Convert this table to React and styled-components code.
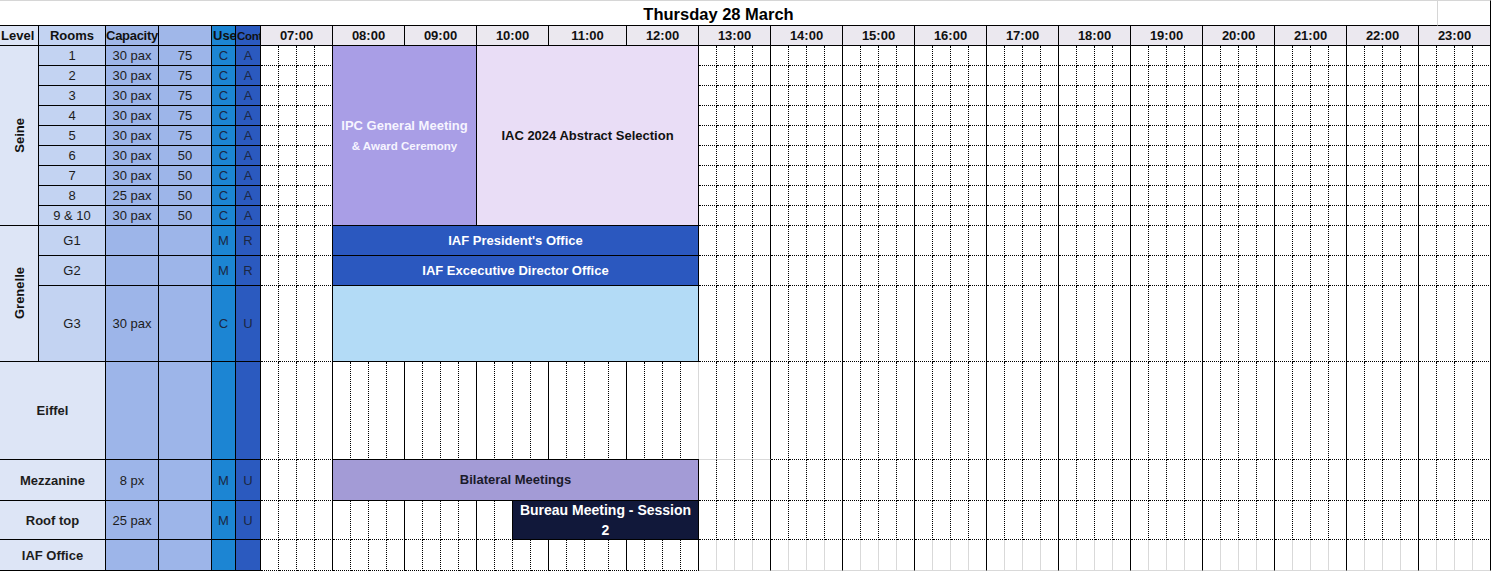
import styled, { createGlobalStyle } from "styled-components"

const HOURS = ["07:00", "08:00", "09:00", "10:00", "11:00", "12:00", "13:00", "14:00", "15:00",
  "16:00", "17:00", "18:00", "19:00", "20:00", "21:00", "22:00", "23:00"]

// every hour is cut in four quarters, 11:00 is a bit wider in the sheet
const SUBS = HOURS.flatMap(h => (h === "11:00" ? [18, 18, 24, 18] : [18, 18, 18, 18]))
const SUB_TRACKS = SUBS.map(w => w + "px").join(" ")

const rooms = [
  { room: "1", cap: "30 pax", size: "75", use: "C", cont: "A" },
  { room: "2", cap: "30 pax", size: "75", use: "C", cont: "A" },
  { room: "3", cap: "30 pax", size: "75", use: "C", cont: "A" },
  { room: "4", cap: "30 pax", size: "75", use: "C", cont: "A" },
  { room: "5", cap: "30 pax", size: "75", use: "C", cont: "A" },
  { room: "6", cap: "30 pax", size: "50", use: "C", cont: "A" },
  { room: "7", cap: "30 pax", size: "50", use: "C", cont: "A" },
  { room: "8", cap: "25 pax", size: "50", use: "C", cont: "A" },
  { room: "9 & 10", cap: "30 pax", size: "50", use: "C", cont: "A" },
  { room: "G1", use: "M", cont: "R" },
  { room: "G2", use: "M", cont: "R" },
  { room: "G3", cap: "30 pax", use: "C", cont: "U" },
  { name: "Eiffel" },
  { name: "Mezzanine", cap: "8 px", use: "M", cont: "U" },
  { name: "Roof top", cap: "25 pax", use: "M", cont: "U" },
  { name: "IAF Office" },
]

const levels = [
  { label: "Seine", row: "3 / 12" },
  { label: "Grenelle", row: "12 / 15" },
]

const events = [
  { col: "11 / 19", row: "3 / 12", bg: "#a99ee6", color: "#f6f4ff", lines: ["IPC General Meeting", "& Award Ceremony"] },
  { col: "19 / 31", row: "3 / 12", bg: "#e9ddf6", lines: ["IAC 2024 Abstract Selection"] },
  { col: "11 / 31", row: "12 / 13", bg: "#2b58bf", color: "#fff", lines: ["IAF President's Office"] },
  { col: "11 / 31", row: "13 / 14", bg: "#2b58bf", color: "#fff", lines: ["IAF Excecutive Director Office"] },
  { col: "11 / 31", row: "14 / 15", bg: "#b3dbf6", lines: [] },
  { col: "11 / 31", row: "16 / 17", bg: "#a39bd6", color: "#1a1a2a", lines: ["Bilateral Meetings"] },
  { col: "21 / 31", row: "17 / 18", bg: "#11183a", color: "#fff", big: true, lines: ["Bureau Meeting - Session 2"] },
]

const GlobalStyle = createGlobalStyle`
  body {
    margin: 0;
    background: #fff;
    font-family: "Liberation Sans", Arial, sans-serif;
  }
`

const Sheet = styled.div`
  display: grid;
  grid-template-columns: 39px 67px 53px 53px 24px 25px ${SUB_TRACKS};
  grid-template-rows: 26px 20px repeat(9, 20px) 30px 30px 76px 98px 41px 39px 31px;
  width: 1491px;
  height: 571px;
  font-size: 13px;
  color: #1c1c1c;
  overflow: hidden;
`

const Title = styled.div`
  grid-column: 1 / 72;
  grid-row: 1;
  border-top: 1px solid #d6d6d6;
  border-bottom: 1px solid #000;
  font-size: 16.5px;
  font-weight: bold;
  color: #000;
  display: flex;
  align-items: center;
  justify-content: center;
  padding-top: 2px;
`

const TitleEnd = styled.div`
  grid-column: 72 / -1;
  grid-row: 1;
  border-top: 1px solid #d6d6d6;
  border-left: 1px solid #d6d6d6;
  border-right: 1px solid #000;
  border-bottom: 1px solid #000;
`

const Head = styled.div`
  grid-row: 2;
  grid-column: ${p => p.$col};
  background: ${p => p.$bg};
  border-right: 1px solid #000;
  border-bottom: 1px solid #000;
  font-weight: bold;
  color: #111;
  display: flex;
  align-items: center;
  justify-content: ${p => (p.$left ? "flex-start" : "center")};
  padding-left: ${p => (p.$left ? "1px" : "0")};
  white-space: nowrap;
  overflow: ${p => (p.$left ? "hidden" : "visible")};
  font-size: ${p => (p.$small ? "11.5px" : "13px")};
  letter-spacing: ${p => (p.$tight ? "-0.3px" : "0")};
`

const HourRow = styled.div`
  grid-row: 2;
  grid-column: 7 / -1;
  display: grid;
  grid-template-columns: ${SUB_TRACKS};
`

const HourHead = styled.div`
  grid-column: span 4;
  background: #ebe8ef;
  border-right: 1px solid #000;
  border-bottom: 1px solid #000;
  font-weight: bold;
  color: #111;
  display: flex;
  align-items: center;
  justify-content: center;
`

const Level = styled.div`
  grid-column: 1;
  grid-row: ${p => p.$row};
  background: #dde5f6;
  border-right: 1px solid #000;
  border-bottom: 1px solid #000;
  display: flex;
  align-items: center;
  justify-content: center;
`

const LevelLabel = styled.span`
  writing-mode: vertical-rl;
  transform: rotate(180deg);
  font-weight: bold;
  color: #111;
`

const Cell = styled.div`
  grid-row: ${p => p.$row};
  grid-column: ${p => p.$col};
  background: ${p => p.$bg};
  border-right: 1px solid #000;
  border-bottom: 1px solid #000;
  display: flex;
  align-items: center;
  justify-content: center;
  white-space: nowrap;
  font-weight: ${p => (p.$bold ? "bold" : "normal")};
  color: ${p => (p.$dark ? "#1b2744" : "#1c1c1c")};
`

const TimeRow = styled.div`
  grid-row: ${p => p.$row};
  grid-column: 7 / -1;
  display: grid;
  grid-template-columns: ${SUB_TRACKS};
`

const lineStyle = kind =>
  kind === "solid" ? "1px solid #000" : kind === "gray" ? "1px solid #d9d9d9" : "1px dotted #000"

const TimeCell = styled.div`
  background: #fff;
  border-right: ${p => lineStyle(p.$right)};
  border-bottom: ${p => lineStyle(p.$bottom)};
`

const Event = styled.div`
  grid-column: ${p => p.$col};
  grid-row: ${p => p.$row};
  margin: -1px 0 0 -1px;
  z-index: 1;
  background: ${p => p.$bg};
  color: ${p => p.$color || "#111"};
  border: 1px solid #000;
  display: flex;
  flex-direction: column;
  align-items: center;
  justify-content: center;
  text-align: center;
  font-weight: bold;
  font-size: ${p => (p.$big ? "14px" : "13px")};
  line-height: 20px;
  padding: 0 4px;
`

const SubLine = styled.span`
  font-size: 11.5px;
`

const EIFFEL = 12
const IAF = 15

function timeBorders(r, s) {
  const hourEnd = s % 4 === 3
  let right = hourEnd ? "solid" : "dotted"
  let bottom = "dotted"
  if (r === EIFFEL && s === 23) right = "gray"
  if (r === EIFFEL && s >= 24 && s < 28) bottom = "gray"
  if (r === IAF && s >= 24) {
    if (!hourEnd) right = "gray"
    bottom = "gray"
  }
  return { right, bottom }
}

const App = () => {
  return (
    <Sheet>
      <GlobalStyle />
      <Title>Thursday 28 March</Title>
      <TitleEnd />

      <Head $col="1" $bg="#dde5f6" $left>Level</Head>
      <Head $col="2" $bg="#c3d3f2">Rooms</Head>
      <Head $col="3" $bg="#a0b7e9" $tight>Capacity</Head>
      <Head $col="4" $bg="#a0b7e9" />
      <Head $col="5" $bg="#1c85d3" $left>Use</Head>
      <Head $col="6" $bg="#2b5abf" $left $small $tight>Cont</Head>
      <HourRow>
        {HOURS.map(h => (
          <HourHead key={h}>{h}</HourHead>
        ))}
      </HourRow>

      {levels.map(l => (
        <Level key={l.label} $row={l.row}>
          <LevelLabel>{l.label}</LevelLabel>
        </Level>
      ))}

      {rooms.map((r, i) => {
        const row = i + 3
        return [
          r.name ? (
            <Cell key={"n" + i} $row={row} $col="1 / 3" $bg="#dde5f6" $bold>{r.name}</Cell>
          ) : (
            <Cell key={"r" + i} $row={row} $col="2" $bg="#c3d3f2">{r.room}</Cell>
          ),
          <Cell key={"c" + i} $row={row} $col="3" $bg="#9db5e9">{r.cap}</Cell>,
          <Cell key={"s" + i} $row={row} $col="4" $bg="#9db5e9">{r.size}</Cell>,
          <Cell key={"u" + i} $row={row} $col="5" $bg="#1c85d3" $dark>{r.use}</Cell>,
          <Cell key={"o" + i} $row={row} $col="6" $bg="#2b5abf" $dark>{r.cont}</Cell>,
          <TimeRow key={"t" + i} $row={row}>
            {SUBS.map((_, s) => {
              const b = timeBorders(i, s)
              return <TimeCell key={s} $right={b.right} $bottom={b.bottom} />
            })}
          </TimeRow>,
        ]
      })}

      {events.map((e, i) => (
        <Event key={i} $col={e.col} $row={e.row} $bg={e.bg} $color={e.color} $big={e.big}>
          {e.lines.map((t, j) =>
            j === 0 ? <span key={j}>{t}</span> : <SubLine key={j}>{t}</SubLine>
          )}
        </Event>
      ))}
    </Sheet>
  )
}

export default App
